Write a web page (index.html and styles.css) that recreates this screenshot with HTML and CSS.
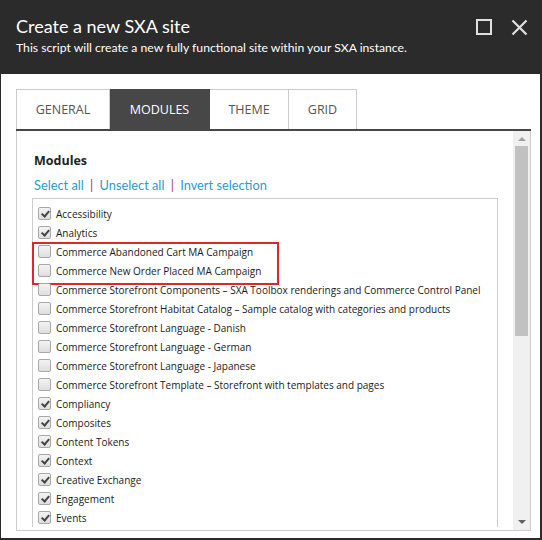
FILE: index.html
```html
<!DOCTYPE html>
<html lang="en">

<head>
  <meta charset="UTF-8">
  <meta name="viewport" content="width=device-width, initial-scale=1.0">
  <title>Create a new SXA site</title>
  <link rel="stylesheet" href="styles.css">
</head>

<body>
  <div class="dialog">
    <div class="header">
      <div class="header-text">
        <h1>Create a new SXA site</h1>
        <p>This script will create a new fully functional site within your SXA instance.</p>
      </div>
      <div class="header-buttons">
        <svg width="16" height="16" viewBox="0 0 16 16"><rect x="1" y="1" width="14" height="14" fill="none" stroke="#e0e0e0" stroke-width="2"/></svg>
        <svg width="17" height="17" viewBox="0 0 17 17"><path d="M1.5 1.5 L15.5 15.5 M15.5 1.5 L1.5 15.5" stroke="#e0e0e0" stroke-width="2.2"/></svg>
      </div>
    </div>

    <div class="body">
      <div class="tabs">
        <div class="tab tab-general">GENERAL</div>
        <div class="tab tab-modules active">MODULES</div>
        <div class="tab tab-theme">THEME</div>
        <div class="tab tab-grid">GRID</div>
      </div>

      <div class="panel">
        <div class="scroll-area">
          <h2>Modules</h2>
          <div class="links">
            <a>Select all</a> <span class="sep">|</span> <a>Unselect all</a> <span class="sep">|</span> <a>Invert selection</a>
          </div>

          <div class="list">
            <span class="highlight"></span>
            <div class="row"><span class="box checked"></span>Accessibility</div>
            <div class="row"><span class="box checked"></span>Analytics</div>
            <div class="row"><span class="box"></span>Commerce Abandoned Cart MA Campaign</div>
            <div class="row"><span class="box"></span>Commerce New Order Placed MA Campaign</div>
            <div class="row"><span class="box"></span>Commerce Storefront Components – SXA Toolbox renderings and Commerce Control Panel</div>
            <div class="row"><span class="box"></span>Commerce Storefront Habitat Catalog – Sample catalog with categories and products</div>
            <div class="row"><span class="box"></span>Commerce Storefront Language - Danish</div>
            <div class="row"><span class="box"></span>Commerce Storefront Language - German</div>
            <div class="row"><span class="box"></span>Commerce Storefront Language - Japanese</div>
            <div class="row"><span class="box"></span>Commerce Storefront Template – Storefront with templates and pages</div>
            <div class="row"><span class="box checked"></span>Compliancy</div>
            <div class="row"><span class="box checked"></span>Composites</div>
            <div class="row"><span class="box checked"></span>Content Tokens</div>
            <div class="row"><span class="box checked"></span>Context</div>
            <div class="row"><span class="box checked"></span>Creative Exchange</div>
            <div class="row"><span class="box checked"></span>Engagement</div>
            <div class="row"><span class="box checked"></span>Events</div>
          </div>
        </div>

        <div class="scrollbar">
          <div class="arrow-up"></div>
          <div class="thumb"></div>
          <div class="track"></div>
          <div class="arrow-down"></div>
        </div>
      </div>
    </div>
  </div>
</body>

</html>
```

FILE: styles.css
```css
/* Dialog */

body {
  font-family: "Open Sans", "Noto Sans", Arial, sans-serif;
  margin: 0;
  background-color: #fff;
}

.dialog {
  width: 542px;
  height: 540px;
  box-sizing: border-box;
  border-left: 1px solid #2b2b2b;
  border-right: 2px solid #2b2b2b;
  border-bottom: 2px solid #2b2b2b;
  display: flex;
  flex-direction: column;
}

.header {
  background-color: #2b2b2b;
  color: #fff;
  height: 74px;
  flex: none;
  display: flex;
  justify-content: space-between;
  padding: 0 12px 0 15px;
  box-sizing: border-box;
}

.header h1 {
  margin: 14px 0 0 0;
  font-family: Lato, "Open Sans", sans-serif;
  font-size: 18px;
  font-weight: normal;
  line-height: 24px;
}

.header p {
  margin: 2px 0 0 0;
  font-family: Lato, "Open Sans", sans-serif;
  font-size: 12.2px;
  line-height: 16px;
}

.header-buttons {
  display: flex;
  gap: 19px;
  padding-top: 19px;
}

/* Tabs */

.body {
  flex: 1;
  display: flex;
  flex-direction: column;
  padding: 15px 9px 7px 15px;
  min-height: 0;
}

.tabs {
  display: flex;
  height: 40px;
  border-bottom: 2px solid #474747;
  flex: none;
}

.tab {
  box-sizing: border-box;
  border: 1px solid #ccc;
  border-bottom: none;
  border-left: none;
  display: flex;
  align-items: center;
  justify-content: center;
  font-size: 12.5px;
  color: #555;
}

.tab-general {
  width: 94px;
  border-left: 1px solid #ccc;
}

.tab-modules {
  width: 100px;
}

.tab-theme {
  width: 79px;
}

.tab-grid {
  width: 68px;
}

.tab.active {
  background-color: #474747;
  border-color: #474747;
  color: #fff;
}

/* Panel */

.panel {
  flex: 1;
  display: flex;
  border: 1px solid #ccc;
  border-top: none;
  min-height: 0;
}

.scroll-area {
  flex: 1;
  overflow: hidden;
  padding: 0 15px 0 15px;
}

.scroll-area h2 {
  font-size: 12.5px;
  font-weight: bold;
  color: #222;
  margin: 22px 0 0 2px;
  line-height: 16px;
}

.links {
  margin: 8px 0 0 2px;
  font-family: Lato, "Open Sans", sans-serif;
  font-size: 12.8px;
  line-height: 16px;
  color: #2a9bd1;
  white-space: nowrap;
}

.links .sep {
  color: #b03a5b;
  margin: 0 3px;
}

.list {
  position: relative;
  margin-top: 5px;
  border: 1px solid #ccc;
  border-bottom: none;
  padding-top: 5px;
  font-size: 10px;
  color: #1a1a1a;
}

.row {
  height: 19px;
  display: flex;
  align-items: center;
  padding-left: 5px;
  white-space: nowrap;
}

.box {
  width: 11px;
  height: 11px;
  border: 1px solid #a8a8a8;
  border-radius: 2px;
  background: linear-gradient(#f3f3f3, #dedede);
  margin-right: 5px;
  flex: none;
  position: relative;
}

.box.checked::after {
  content: "";
  position: absolute;
  left: 3.5px;
  top: 1px;
  width: 2.5px;
  height: 6px;
  border: solid #444;
  border-width: 0 2px 2px 0;
  transform: rotate(40deg);
}

.highlight {
  position: absolute;
  left: -1px;
  top: 43px;
  width: 243px;
  height: 39px;
  border: 2px solid #e0262b;
}

/* Scrollbar */

.scrollbar {
  width: 17px;
  flex: none;
  background-color: #f0f0f0;
  display: flex;
  flex-direction: column;
  align-items: center;
}

.arrow-up {
  margin-top: 6px;
  width: 0;
  height: 0;
  border-left: 4px solid transparent;
  border-right: 4px solid transparent;
  border-bottom: 4px solid #a0a0a0;
}

.thumb {
  margin-top: 5px;
  width: 13px;
  height: 190px;
  background-color: #c1c1c1;
}

.track {
  flex: 1;
}

.arrow-down {
  margin-bottom: 6px;
  width: 0;
  height: 0;
  border-left: 4px solid transparent;
  border-right: 4px solid transparent;
  border-top: 4px solid #606060;
}
```
